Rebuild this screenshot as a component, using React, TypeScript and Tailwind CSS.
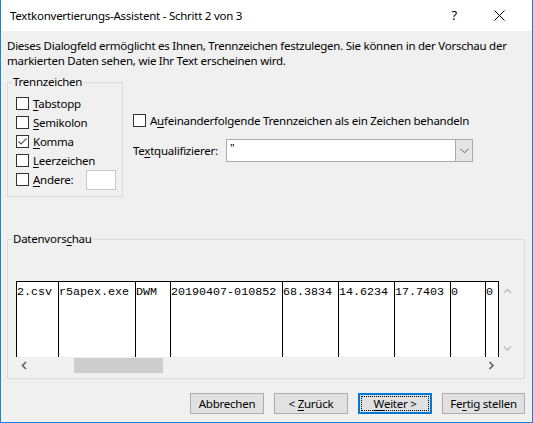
import React from "react";

const U: React.FC<{ children: React.ReactNode }> = ({ children }) => (
  <span className="underline underline-offset-[2px] decoration-1">{children}</span>
);

const Box: React.FC<{ checked?: boolean }> = ({ checked }) => (
  <span className="w-[13px] h-[13px] border border-[#333333] bg-white shrink-0 flex items-center justify-center">
    {checked && (
      <svg width="11" height="11" viewBox="0 0 11 11">
        <polyline points="1.5,5.5 4,8 9.5,2.5" fill="none" stroke="#555555" strokeWidth="1.1" />
      </svg>
    )}
  </span>
);

const Chevron: React.FC<{ dir: "up" | "down" | "left" | "right"; color: string }> = ({ dir, color }) => {
  const pts = {
    up: "1,5 4.5,1.5 8,5",
    down: "1,1.5 4.5,5 8,1.5",
    left: "5,1 1.5,4.5 5,8",
    right: "1.5,1 5,4.5 1.5,8",
  }[dir];
  const vertical = dir === "up" || dir === "down";
  return (
    <svg width={vertical ? 9 : 7} height={vertical ? 7 : 9} viewBox={vertical ? "0 0 9 7" : "0 0 7 9"}>
      <polyline points={pts} fill="none" stroke={color} strokeWidth="1.6" />
    </svg>
  );
};

const columns = [
  { w: "w-[42px]", text: "2.csv" },
  { w: "w-[77px]", text: "r5apex.exe" },
  { w: "w-[35px]", text: "DWM" },
  { w: "w-[112px]", text: "20190407-010852" },
  { w: "w-[56px]", text: "68.3834" },
  { w: "w-[56px]", text: "14.6234" },
  { w: "w-[56px]", text: "17.7403" },
  { w: "w-[35px]", text: "0" },
  { w: "w-[14px]", text: "0" },
];

export default function App() {
  return (
    <div className="w-[533px] h-[423px] flex flex-col bg-[#f0f0f0] border-x border-b border-[#1883d7] font-['Noto_Sans',sans-serif] text-[11.5px] tracking-[-0.25px] text-black overflow-hidden">
      {/* title bar */}
      <div className="h-[31px] shrink-0 bg-white flex items-center">
        <span className="pl-[9px] leading-[15px]">Textkonvertierungs-Assistent - Schritt 2 von 3</span>
        <span className="ml-auto mr-[37px] text-[13px] leading-[15px]">?</span>
        <svg className="mr-[27px]" width="11" height="11" viewBox="0 0 11 11">
          <path d="M0.5 0.5 L10.5 10.5 M10.5 0.5 L0.5 10.5" stroke="#000" strokeWidth="1" />
        </svg>
      </div>

      <div className="px-[6px] pt-[7px] leading-[15px] h-[37px] shrink-0 whitespace-nowrap">
        Dieses Dialogfeld ermöglicht es Ihnen, Trennzeichen festzulegen. Sie können in der Vorschau der
        <br />
        markierten Daten sehen, wie Ihr Text erscheinen wird.
      </div>

      <div className="flex px-[6px] mt-[14px] shrink-0">
        {/* Trennzeichen */}
        <div className="relative w-[116px] h-[115px] border border-[#dcdcdc] pt-[11px] pl-[8px]">
          <span className="absolute -top-[9px] left-[4px] px-[1px] bg-[#f0f0f0] leading-[15px]">Trennzeichen</span>
          {[
            { l: "T", r: "abstopp" },
            { l: "S", r: "emikolon" },
            { l: "K", r: "omma", checked: true },
            { l: "L", r: "eerzeichen" },
          ].map((item) => (
            <div key={item.r} className="h-[19px] flex items-center gap-[4px]">
              <Box checked={item.checked} />
              <span className="leading-[15px]">
                <U>{item.l}</U>
                {item.r}
              </span>
            </div>
          ))}
          <div className="h-[19px] flex items-center">
            <Box />
            <span className="leading-[15px] ml-[4px]">
              <U>A</U>ndere:
            </span>
            <span className="ml-auto mr-[6px] w-[30px] h-[20px] bg-white border border-[#c8c8c8]" />
          </div>
        </div>

        {/* right side */}
        <div className="ml-[10px] pt-[29px]">
          <div className="h-[19px] flex items-center gap-[4px]">
            <Box />
            <span className="leading-[15px]">
              A<U>u</U>feinanderfolgende Trennzeichen als ein Zeichen behandeln
            </span>
          </div>
          <div className="flex items-center mt-[9px]">
            <span className="w-[93px] leading-[15px]">
              Te<U>x</U>tqualifizierer:
            </span>
            <div className="w-[247px] h-[23px] flex border border-[#acacac] bg-white">
              <span className="flex-1 pl-[3px] leading-[16px]">"</span>
              <span className="w-[17px] bg-[#e5e5e5] border-l border-[#acacac] flex items-center justify-center">
                <svg width="9" height="6" viewBox="0 0 9 6">
                  <polyline points="0.5,0.8 4.5,4.8 8.5,0.8" fill="none" stroke="#606060" strokeWidth="1" />
                </svg>
              </span>
            </div>
          </div>
        </div>
      </div>

      {/* Datenvorschau */}
      <div className="relative mx-[6px] mt-[42px] w-[518px] h-[140px] shrink-0 border border-[#dcdcdc] pt-[41px] pl-[8px]">
        <span className="absolute -top-[9px] left-[4px] px-[1px] bg-[#f0f0f0] leading-[15px]">
          Datenvors<U>c</U>hau
        </span>
        <div className="w-[501px] flex flex-col">
          <div className="flex h-[76px]">
            <div className="flex bg-white">
              {columns.map((c, i) => (
                <div
                  key={i}
                  className={`${c.w} h-[76px] border-t border-l border-black ${i === columns.length - 1 ? "border-r" : ""} overflow-hidden whitespace-nowrap font-['Liberation_Mono',monospace] text-[11.7px] tracking-normal leading-[14px] pt-[3px]`}
                >
                  {c.text}
                </div>
              ))}
            </div>
            <div className="w-[17px] flex flex-col items-center justify-between pt-[7px] pb-[5px]">
              <Chevron dir="up" color="#c0c0c0" />
              <Chevron dir="down" color="#c0c0c0" />
            </div>
          </div>
          <div className="flex h-[17px]">
            <div className="w-[484px] flex items-center">
              <span className="w-[17px] flex justify-center">
                <Chevron dir="left" color="#606060" />
              </span>
              <span className="ml-[41px] w-[89px] h-[15px] bg-[#cdcdcd]" />
              <span className="ml-auto w-[17px] flex justify-center">
                <Chevron dir="right" color="#606060" />
              </span>
            </div>
          </div>
        </div>
      </div>

      {/* buttons */}
      <div className="flex justify-end gap-[10px] pr-[7px] mt-[14px] shrink-0">
        <button className="w-[74px] h-[21px] bg-[#e1e1e1] border border-[#adadad] leading-[15px]">Abbrechen</button>
        <button className="w-[74px] h-[21px] bg-[#e1e1e1] border border-[#adadad] leading-[15px]">
          &lt; <U>Z</U>urück
        </button>
        <button className="w-[74px] h-[21px] bg-[#e1e1e1] border-2 border-[#0078d7] p-[1px]">
          <span className="w-full h-full flex items-center justify-center border border-dotted border-black leading-[15px]">
            <U>W</U>eiter &gt;
          </span>
        </button>
        <button className="w-[83px] h-[21px] bg-[#e1e1e1] border border-[#adadad] leading-[15px]">
          Fe<U>r</U>tig stellen
        </button>
      </div>
    </div>
  );
}
